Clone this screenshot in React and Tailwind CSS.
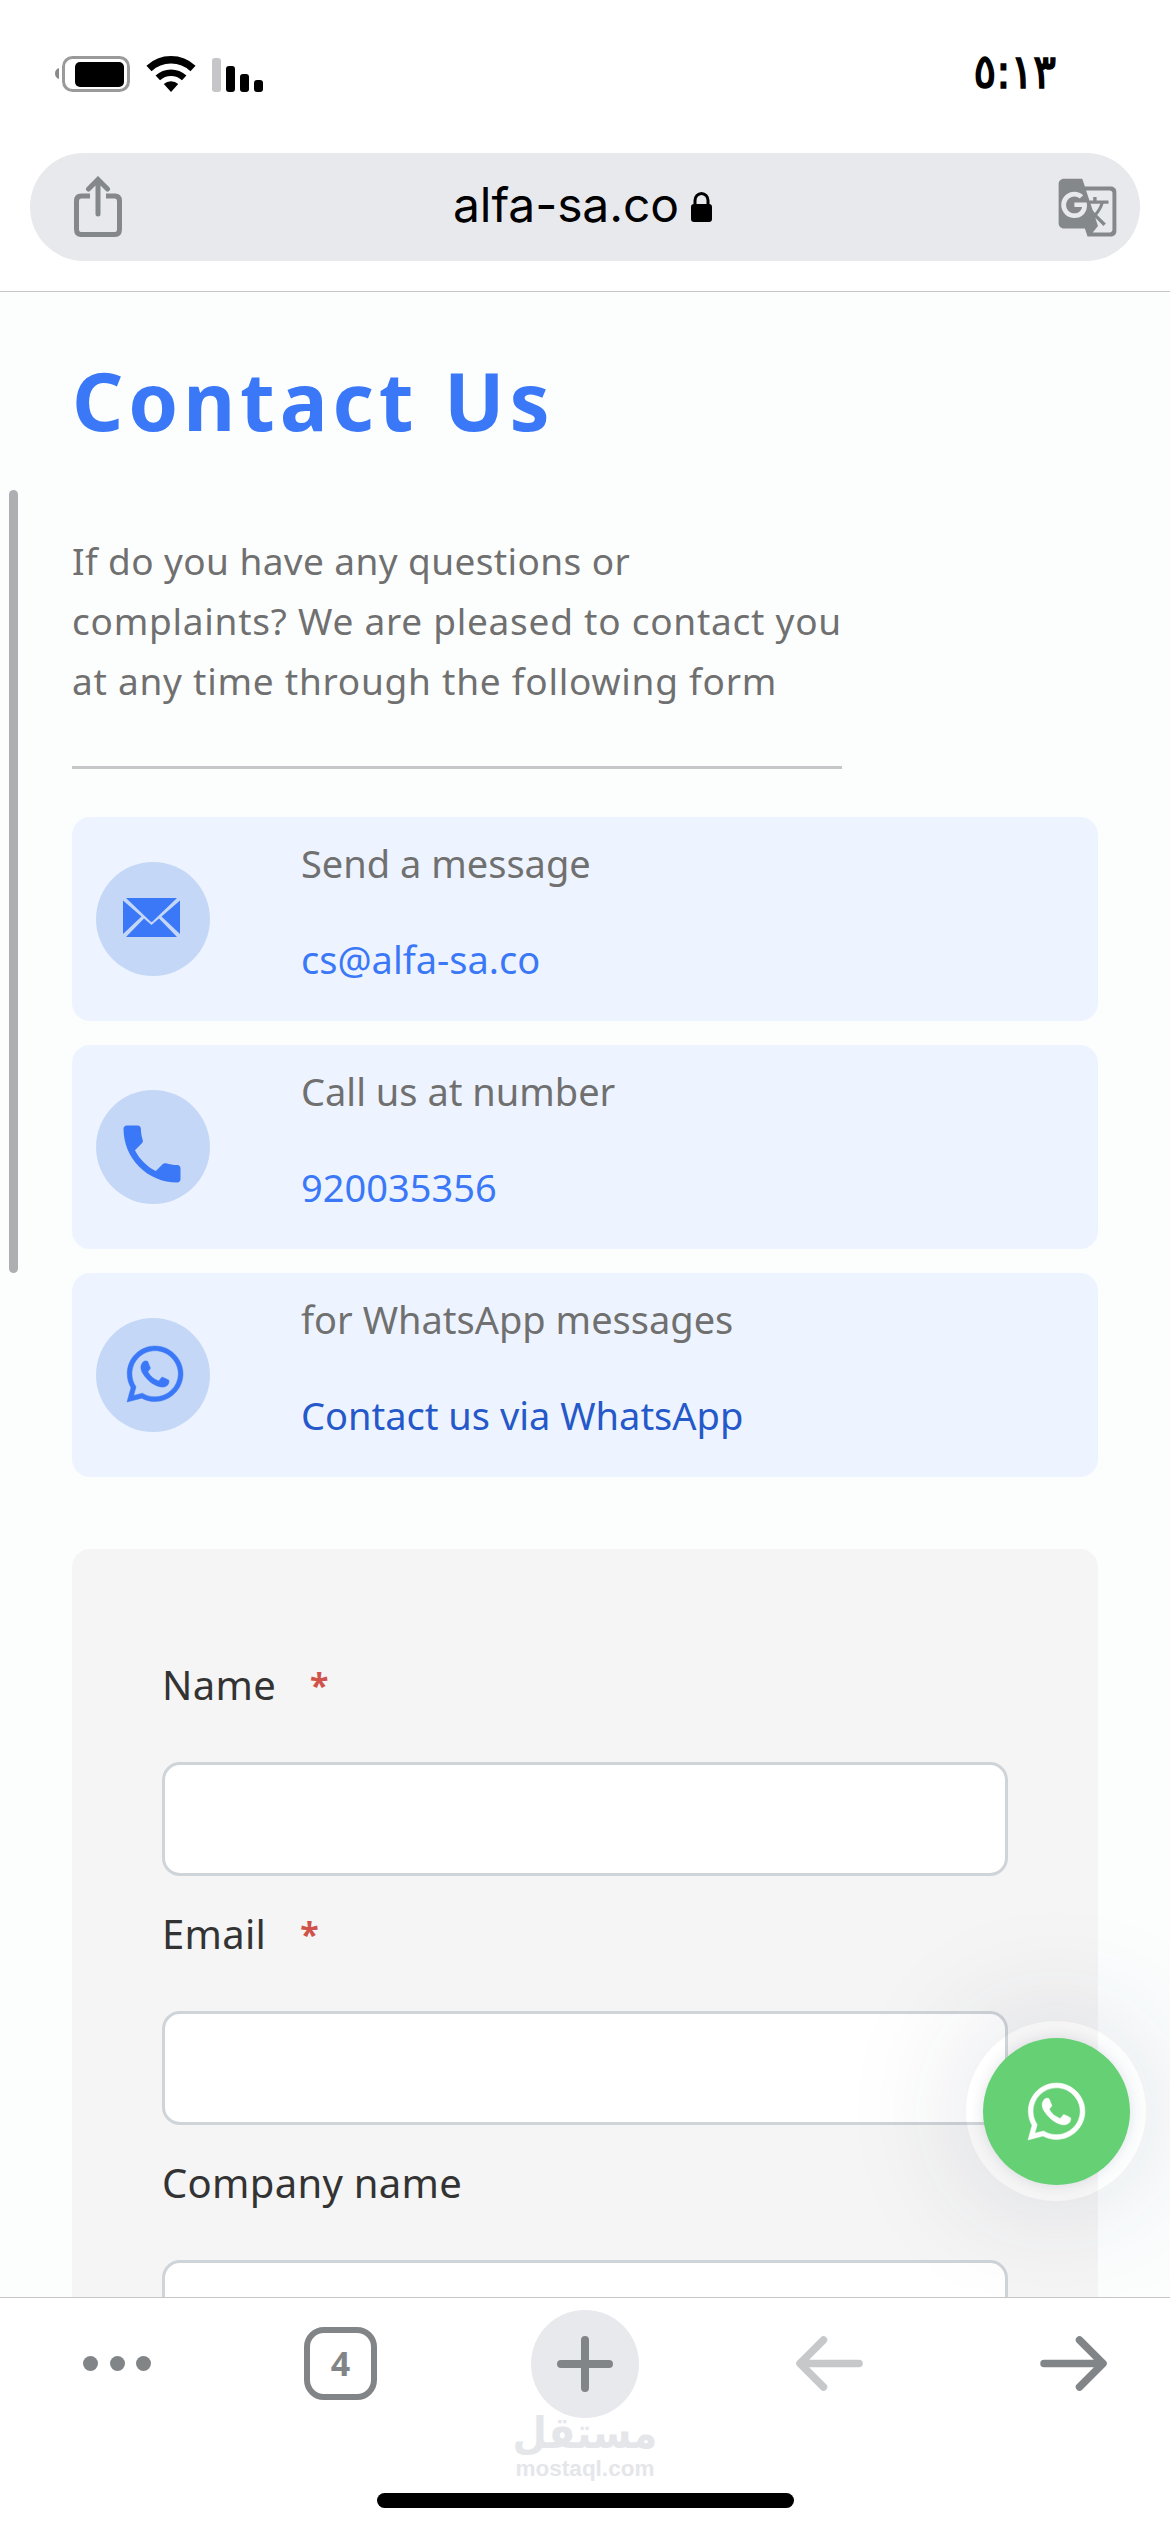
import { FaWhatsapp } from "react-icons/fa";
import { MdPhone, MdGTranslate } from "react-icons/md";

const contacts = [
  {
    label: "Send a message",
    value: "cs@alfa-sa.co",
    color: "text-[#3b78f8]",
    icon: <MailIcon />,
  },
  {
    label: "Call us at number",
    value: "920035356",
    color: "text-[#3b78f8]",
    icon: <MdPhone className="w-[76px] h-[76px] -ml-[3px] mt-[13px]" />,
  },
  {
    label: "for WhatsApp messages",
    value: "Contact us via WhatsApp",
    color: "text-[#2558c9]",
    icon: <FaWhatsapp className="w-[64px] h-[64px] ml-[3px] -mt-[3px]" stroke="currentColor" strokeWidth="4" />,
  },
];

const fields = [
  { label: "Name", required: true },
  { label: "Email", required: true },
  { label: "Company name", required: false },
];

function MailIcon() {
  return (
    <svg viewBox="0 0 57 39" className="w-[57px] h-[39px] -ml-1 -mt-[3px]" fill="currentColor">
      <path d="M3 0H54L29.5 23.5Q28.5 24.5 27.5 23.5Z" />
      <path d="M0 2.5L18.5 18.5L0 36Z" />
      <path d="M57 2.5L38.5 18.5L57 36Z" />
      <path d="M21 20.5L28.5 27L36 20.5L54 39H3Z" />
    </svg>
  );
}

function StatusBar() {
  return (
    <div className="flex h-[147px] items-center justify-between pl-[55px] pr-[114px]">
      <svg width="210" height="38" viewBox="0 0 210 38">
        <path d="M4 13v11c-2.500-.8-4-2.800-4-5.500s1.500-4.700 4-5.500z" fill="#8a8a8a" />
        <rect x="8.500" y="2.500" width="65" height="33" rx="9" fill="none" stroke="#9a9a9a" strokeWidth="3" />
        <rect x="20" y="7" width="49" height="25" rx="5" />
        <g fill="none" stroke="black">
          <path d="M94 13.500A32.200 32.200 0 0 1 138 13.500" strokeWidth="7.500" />
          <path d="M102.800 22.900A19.300 19.300 0 0 1 129.200 22.900" strokeWidth="6.500" />
        </g>
        <path d="M108.800 29A10.500 10.500 0 0 1 123.200 29L116 37Z" />
        <rect x="157" y="3" width="9" height="34" rx="3" fill="#c6c6c8" />
        <rect x="171" y="11" width="9" height="26" rx="3" />
        <rect x="185" y="19" width="9" height="18" rx="3" />
        <rect x="199" y="25" width="9" height="12" rx="3" />
      </svg>
      <span className="mb-1 text-[47px] leading-none font-medium tracking-[-3px] [-webkit-text-stroke:1.5px_black] font-['DejaVu_Sans_Condensed','DejaVu_Sans',sans-serif]">
        ٥:١٣
      </span>
    </div>
  );
}

function AddressBar() {
  return (
    <div className="mx-[30px] mt-1.5 flex h-[108px] items-center rounded-full bg-[#e8e9ed] pl-[44px] pr-[21px]">
      <svg width="48" height="62" viewBox="0 0 48 62" fill="none" stroke="#85888b" strokeWidth="5" strokeLinecap="round">
        <path d="M16 20H7Q2.500 20 2.500 25V53Q2.500 58.500 7 58.500H41Q45.500 58.500 45.500 53V25Q45.500 20 41 20H32" strokeLinecap="butt" />
        <path d="M24 38V4M14.500 13L24 3.500L33.500 13" />
      </svg>
      <div className="ml-[331px] mb-1 flex items-center gap-[13px]">
        <span className="w-[225px] text-[48px] leading-none tracking-[-0.1px] whitespace-nowrap font-['Inter',sans-serif]">
          alfa-sa.co
        </span>
        <svg width="21" height="30" viewBox="0 0 21 30" className="mt-1">
          <rect y="12" width="21" height="18" rx="3" />
          <path d="M4 13V8.500a6.500 7 0 0 1 13 0V13" fill="none" stroke="black" strokeWidth="3" />
        </svg>
      </div>
      <MdGTranslate className="ml-auto w-[63px] h-[63px] text-[#85888b]" />
    </div>
  );
}

function ContactCard({ label, value, color, icon }) {
  return (
    <div className="flex h-[204px] rounded-[18px] bg-[#eef4ff] pl-6">
      <div className="mt-[45px] flex h-[114px] w-[114px] items-center justify-center rounded-full bg-[#c5d7f6] text-[#3b78f8]">
        {icon}
      </div>
      <div className="ml-[91px] pt-4 text-[38px] leading-[60px]">
        <p className="text-[#707070]">{label}</p>
        <p className={`mt-9 ${color}`}>{value}</p>
      </div>
    </div>
  );
}

function Field({ label, required }) {
  return (
    <div className="h-[249px]">
      <label className="flex h-[135px] items-start gap-[34px] pt-7 text-[40px] leading-[60px] tracking-[0.3px] text-[#333]">
        {label}
        {required && <span className="text-[34px] font-bold text-[#d0524b]">*</span>}
      </label>
      <input className="block h-[114px] w-full rounded-[18px] border-[3px] border-[#cfd4d8] bg-white" />
    </div>
  );
}

function WhatsAppButton() {
  return (
    <div className="absolute right-6 bottom-[96px] flex h-[180px] w-[180px] items-center justify-center rounded-full shadow-[0_0_130px_rgba(40,50,90,0.15)]">
      <div className="flex h-[147px] w-[147px] items-center justify-center rounded-full bg-[#66d074] text-white shadow-[0_0_14px_rgba(40,50,90,0.14)]">
        <FaWhatsapp className="w-[65px] h-[65px]" stroke="currentColor" strokeWidth="4" />
      </div>
    </div>
  );
}

function Toolbar() {
  return (
    <div className="relative h-[235px] border-t border-[#c6c6c8] bg-white">
      <div className="flex h-[131px] items-center pl-[83px] text-[#828587]">
        <div className="flex w-[68px] justify-between">
          <span className="h-[15px] w-[15px] rounded-full bg-current" />
          <span className="h-[15px] w-[15px] rounded-full bg-current" />
          <span className="h-[15px] w-[15px] rounded-full bg-current" />
        </div>
        <div className="ml-[153px] flex h-[73px] w-[73px] items-center justify-center rounded-[20px] border-[6px] border-current text-[34px] font-bold font-['Open_Sans',sans-serif]">
          4
        </div>
        <div className="ml-[154px] flex h-[108px] w-[108px] items-center justify-center rounded-full bg-[#e8e9ed]">
          <svg width="56" height="56" viewBox="0 0 56 56" stroke="currentColor" strokeWidth="8" strokeLinecap="round">
            <path d="M28 4V52M4 28H52" />
          </svg>
        </div>
        <svg className="ml-[157px]" width="67" height="55" viewBox="0 0 67 55" fill="none" stroke="#c6c8ca" strokeWidth="7.500" strokeLinecap="round" strokeLinejoin="round">
          <path d="M63 27.500H5M27.500 4L4 27.500L27.500 51" />
        </svg>
        <svg className="ml-[177px]" width="67" height="55" viewBox="0 0 67 55" fill="none" stroke="currentColor" strokeWidth="7.500" strokeLinecap="round" strokeLinejoin="round">
          <path d="M4 27.500H62M39.500 4L63 27.500L39.500 51" />
        </svg>
      </div>
      <div className="absolute top-[111px] left-0 flex w-full flex-col items-center text-[#e4e6ea]">
        <span className="text-[44px] leading-[48px] font-bold font-['DejaVu_Sans_Condensed','DejaVu_Sans',sans-serif]">مستقل</span>
        <span className="text-[22.5px] leading-[24px] font-bold font-['Liberation_Sans',sans-serif]">mostaql.com</span>
      </div>
      <div className="absolute bottom-6 left-[377px] h-[15px] w-[417px] rounded-full bg-black" />
    </div>
  );
}

export default function App() {
  return (
    <div className="flex h-[2532px] w-[1170px] flex-col overflow-hidden bg-white font-['Noto_Sans',sans-serif] text-black">
      <header className="h-[292px] shrink-0 border-b border-[#c6c6c8]">
        <StatusBar />
        <AddressBar />
      </header>

      <main className="relative h-[2005px] shrink-0 overflow-hidden bg-[#fcfefe] px-[72px]">
        <div className="absolute top-[198px] left-[9px] h-[783px] w-[9px] rounded-full bg-[#aeafb2]" />
        <h1 className="pt-12 text-[80px] leading-[120px] font-bold tracking-[4.9px] text-[#3b78f8]">Contact Us</h1>
        <p className="mt-[71px] w-[800px] text-[37px] leading-[60px] whitespace-nowrap text-[#707070]">
          <span className="tracking-[0.4px]">If do you have any questions or</span>
          <br />
          <span className="tracking-[0.75px]">complaints? We are pleased to contact you</span>
          <br />
          <span className="tracking-[0.75px]">at any time through the following form</span>
        </p>
        <div className="mt-[55px] h-[3px] w-[770px] bg-[#c6c6c8]" />

        <div className="mt-12 flex flex-col gap-6">
          {contacts.map((c) => (
            <ContactCard key={c.label} {...c} />
          ))}
        </div>

        <form className="mt-[72px] rounded-[18px] bg-[#f5f5f5] px-[90px] pt-[78px]">
          {fields.map((f) => (
            <Field key={f.label} {...f} />
          ))}
        </form>

        <WhatsAppButton />
      </main>

      <Toolbar />
    </div>
  );
}
